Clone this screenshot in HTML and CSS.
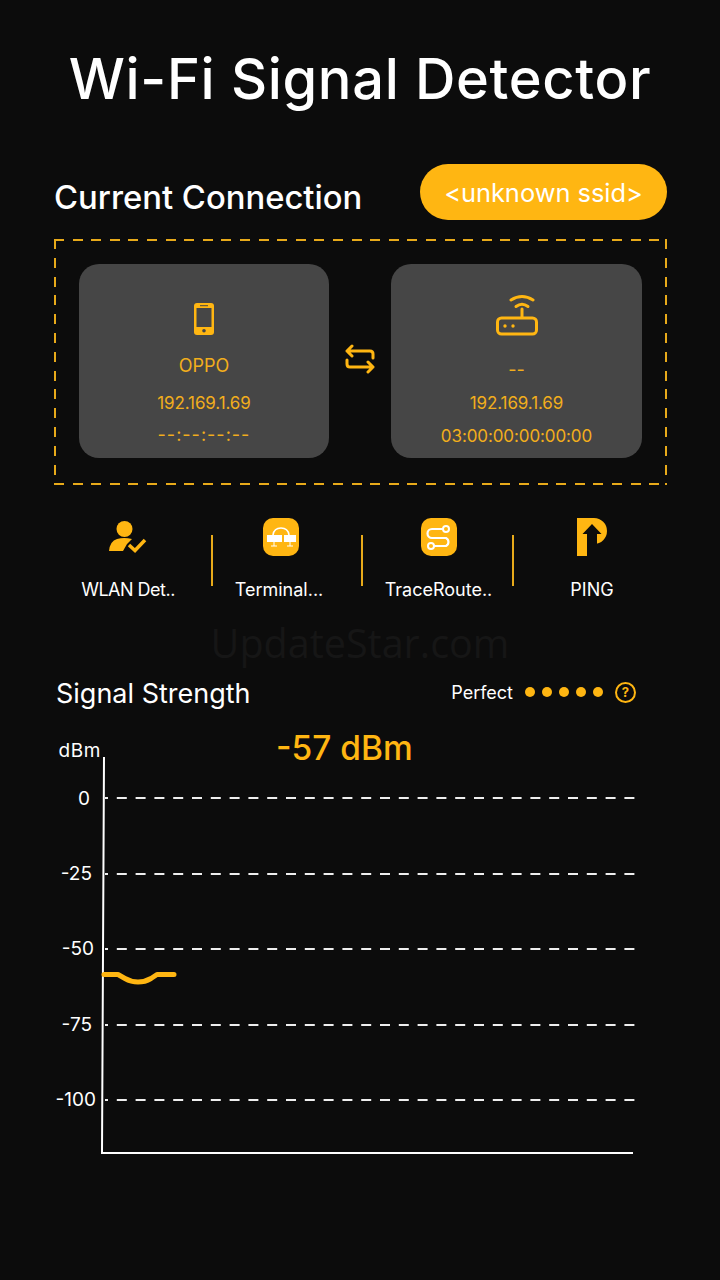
FILE: index.html
```html
<!DOCTYPE html>
<html>
<head>
  <title>Wi-Fi Signal Detector</title>
  <link rel="stylesheet" href="styles.css">
</head>
<body>
  <h1 class="title">Wi-Fi Signal Detector</h1>

  <div class="conn-head">
    <h2>Current Connection</h2>
    <div class="ssid">&lt;unknown ssid&gt;</div>
  </div>

  <div class="conn-box">
    <div class="device">
      <svg class="device-icon" width="20" height="32" viewBox="0 0 20 32">
        <rect width="20" height="32" x="0" y="0" rx="3" fill="#ffb612"/>
        <rect x="2.5" y="5" width="15" height="19" fill="#464646"/>
        <rect x="6" y="2.2" width="8" height="1" fill="#464646"/>
        <circle cx="10" cy="27.8" r="1.8" fill="#464646"/>
      </svg>
      <div class="device-name">OPPO</div>
      <div class="device-line">192.169.1.69</div>
      <div class="device-line mac">--:--:--:--</div>
    </div>
    <svg class="swap" width="30" height="30" viewBox="0 0 30 30" fill="none" stroke="#ffb612" stroke-width="3" stroke-linecap="round" stroke-linejoin="round">
      <path d="M7 2 L2 7 L7 12 M2 7 H25 Q28 7 28 10 V14"/>
      <path d="M23 18 L28 23 L23 28 M28 23 H5 Q2 23 2 20 V16"/>
    </svg>
    <div class="device">
      <svg class="device-icon router" width="42" height="42" viewBox="0 0 42 42" fill="none" stroke="#ffb612" stroke-linecap="round">
        <path d="M15 6 Q26 -1 37 6" stroke-width="3"/>
        <path d="M20 12.500 Q26 8 32 12.500" stroke-width="3"/>
        <path d="M26 15 V23" stroke-width="3"/>
        <rect x="1.500" y="24" width="39" height="16" rx="4" stroke-width="3"/>
        <circle cx="9" cy="32" r="1.700" fill="#ffb612" stroke="none"/>
        <circle cx="17" cy="32" r="1.700" fill="#ffb612" stroke="none"/>
      </svg>
      <div class="device-name dashes">--</div>
      <div class="device-line">192.169.1.69</div>
      <div class="device-line">03:00:00:00:00:00</div>
    </div>
  </div>

  <div class="tools">
    <div class="tool tool-wlan">
      <svg width="38" height="38" viewBox="0 0 38 38">
        <circle cx="15.500" cy="11" r="8" fill="#ffb612"/>
        <path d="M0 33 Q1 23 8 21 Q15 19 23 21 L18 26 L14 33 Z" fill="#ffb612"/>
        <path d="M20 27 L26 32.500 L36 22" fill="none" stroke="#ffb612" stroke-width="3.500"/>
      </svg>
      <div class="tool-label">WLAN Det..</div>
    </div>
    <div class="tool-sep"></div>
    <div class="tool tool-term">
      <svg width="36" height="38" viewBox="0 0 36 38">
        <rect width="36" height="38" rx="10" fill="#ffb612"/>
        <path d="M10 17 Q11 10 18 10 Q25 10 26 17" fill="none" stroke="#fff" stroke-width="1.600"/>
        <rect x="4" y="17" width="15" height="7" fill="#fff"/>
        <rect x="21" y="17" width="12" height="7" fill="#fff"/>
        <path d="M11 24 V28 M8 28 H14 M27 24 V28 M24 28 H30" stroke="#fff" stroke-width="1"/>
      </svg>
      <div class="tool-label">Terminal...</div>
    </div>
    <div class="tool-sep"></div>
    <div class="tool tool-trace">
      <svg width="36" height="38" viewBox="0 0 36 38">
        <rect width="36" height="38" rx="10" fill="#ffb612"/>
        <path d="M22 11 H11 A4.500 4.500 0 0 0 11 20 H25 A4.500 4.500 0 0 1 25 28 H13" fill="none" stroke="#fff" stroke-width="2.200"/>
        <circle cx="25" cy="11" r="3" fill="#ffb612" stroke="#fff" stroke-width="2"/>
        <circle cx="10" cy="28" r="3" fill="#ffb612" stroke="#fff" stroke-width="2"/>
      </svg>
      <div class="tool-label">TraceRoute..</div>
    </div>
    <div class="tool-sep"></div>
    <div class="tool">
      <svg width="30" height="38" viewBox="0 0 30 38">
        <path d="M0 0 H17 A13 13 0 0 1 17 26 H10 V38 H0 Z" fill="#ffb612"/>
        <path d="M15 6 L24.500 16 H20 V38 H10 V16 H5.500 Z" fill="#0c0c0c"/>
      </svg>
      <div class="tool-label">PING</div>
    </div>
  </div>

  <div class="watermark">UpdateStar.com</div>

  <div class="signal-head">
    <h3>Signal Strength</h3>
    <div class="quality">
      <span class="quality-text">Perfect</span>
      <span class="dot"></span>
      <span class="dot"></span>
      <span class="dot"></span>
      <span class="dot"></span>
      <span class="dot"></span>
      <span class="help">?</span>
    </div>
  </div>

  <svg class="chart" width="720" height="447" viewBox="0 713 720 447">
    <text class="reading" x="276" y="760">-57 dBm</text>
    <g class="grid">
      <line x1="105" x2="636" y1="798" y2="798"/>
      <line x1="105" x2="636" y1="874" y2="874"/>
      <line x1="105" x2="636" y1="949" y2="949"/>
      <line x1="105" x2="636" y1="1025" y2="1025"/>
      <line x1="105" x2="636" y1="1100" y2="1100"/>
    </g>
    <path class="axis" d="M104 757 L102 1153 H633"/>
    <path class="trace" d="M104 974.500 H118 L125 978.500 Q131 982 138 982 Q145 982 151 978.500 L157 974.500 H174"/>
    <g class="ticks">
      <text class="unit" x="101" y="757">dBm</text>
      <text x="90" y="805">0</text>
      <text x="92" y="880">-25</text>
      <text x="94" y="955">-50</text>
      <text x="92" y="1031">-75</text>
      <text x="96" y="1106">-100</text>
    </g>
  </svg>
</body>
</html>
```

FILE: styles.css
```css
body {
  margin: 0;
  background-color: #0c0c0c;
  color: #fff;
  font-family: Inter, "Open Sans", sans-serif;
  width: 720px;
  height: 1280px;
  overflow: hidden;
}
.title {
  margin: 0;
  padding-top: 47px;
  height: 73px;
  line-height: 64px;
  font-size: 56px;
  letter-spacing: 0.65px;
  font-weight: 500;
  text-align: center;
}
.conn-head {
  display: flex;
  justify-content: space-between;
  margin: 44px 53px 0 54px;
  height: 56px;
}
.conn-head h2 {
  margin: 0;
  padding-top: 11px;
  font-size: 32.800px;
  line-height: 44px;
  font-weight: 500;
}
.ssid {
  width: 247px;
  height: 56px;
  line-height: 58px;
  border-radius: 28px;
  background-color: #ffb612;
  font-size: 25.400px;
  text-align: center;
}
.conn-box {
  display: grid;
  grid-template-columns: 250px 1fr 251px;
  align-items: start;
  justify-items: center;
  box-sizing: border-box;
  width: 613px;
  height: 246px;
  margin: 19px 0 0 54px;
  padding: 25px 25px 0;
  background-image:
    repeating-linear-gradient(90deg, #e8aa1a 0 10px, transparent 10px 18.600px),
    repeating-linear-gradient(90deg, #e8aa1a 0 10px, transparent 10px 18.600px),
    repeating-linear-gradient(180deg, #e8aa1a 0 10px, transparent 10px 18.800px),
    repeating-linear-gradient(180deg, #e8aa1a 0 10px, transparent 10px 18.800px);
  background-size: 100% 2px, 100% 2px, 2px 100%, 2px 100%;
  background-position: 0 0, 0 100%, 0 0, 100% 0;
  background-repeat: no-repeat;
}
.device {
  width: 100%;
  height: 194px;
  border-radius: 20px;
  background-color: #464646;
  color: #f2ae1c;
  text-align: center;
  font-size: 17px;
  letter-spacing: -0.1px;
}
.swap {
  margin-top: 80px;
}
.device-icon {
  display: block;
  margin: 39px auto 0;
}
.device-icon.router {
  margin-top: 30px;
}
.device-name {
  margin-top: 19px;
  line-height: 24px;
  font-size: 18px;
  letter-spacing: 0;
}
.dashes {
  margin-top: 22px;
}
.device-line {
  margin-top: 9px;
  line-height: 24px;
}
.device-name + .device-line {
  margin-top: 13px;
}
.dashes + .device-line {
  margin-top: 9px;
}
.device-line.mac {
  margin-top: 8px;
  font-size: 18px;
  letter-spacing: 1px;
}
.tools {
  display: grid;
  grid-template-columns: 166px 2px 148px 2px 149px 2px 156px;
  margin: 33px 0 0 45px;
  height: 100px;
}
.tool {
  text-align: center;
}
.tool svg {
  display: block;
  margin: 0 auto;
}
.tool-label {
  margin-top: 22px;
  font-size: 18px;
  line-height: 24px;
  white-space: nowrap;
}
.tool-wlan .tool-label {
  letter-spacing: -0.5px;
}
.tool-term {
  padding-right: 12px;
}
.tool-term .tool-label {
  margin-right: 4px;
}
.tool-trace {
  padding-left: 2px;
}
.tool-sep {
  width: 2px;
  height: 51px;
  margin-top: 17px;
  background-color: #e8aa1a;
}
.watermark {
  height: 50px;
  line-height: 50px;
  text-align: center;
  font-family: "Open Sans", sans-serif;
  font-size: 39.500px;
  color: #161616;
}
.signal-head {
  display: flex;
  justify-content: space-between;
  align-items: center;
  margin: 5px 84px 0 56px;
  height: 40px;
}
.signal-head h3 {
  margin: 0;
  font-size: 27px;
  font-weight: 400;
}
.quality {
  display: flex;
  align-items: center;
  margin-bottom: 2px;
}
.quality-text {
  font-size: 18px;
  margin-right: 12px;
}
.dot {
  width: 10px;
  height: 10px;
  border-radius: 50%;
  background-color: #ffb612;
  margin-right: 7px;
}
.help {
  box-sizing: border-box;
  width: 21px;
  height: 21px;
  margin-left: 5px;
  border: 2px solid #ffb612;
  border-radius: 50%;
  color: #ffb612;
  font-size: 13px;
  font-weight: 700;
  line-height: 17px;
  text-align: center;
}
.chart {
  display: block;
}
.reading {
  font-size: 33.500px;
  font-weight: 500;
  fill: #ffb612;
}
.grid line {
  stroke: #eee;
  stroke-width: 2;
  stroke-dasharray: 10 8.800;
  stroke-dashoffset: 7;
}
.axis {
  fill: none;
  stroke: #fff;
  stroke-width: 2;
}
.trace {
  fill: none;
  stroke: #ffb612;
  stroke-width: 5;
  stroke-linecap: round;
  stroke-linejoin: round;
}
.ticks text {
  fill: #fff;
  font-size: 19px;
  text-anchor: end;
}
.ticks .unit {
  letter-spacing: 0.6px;
}
```
